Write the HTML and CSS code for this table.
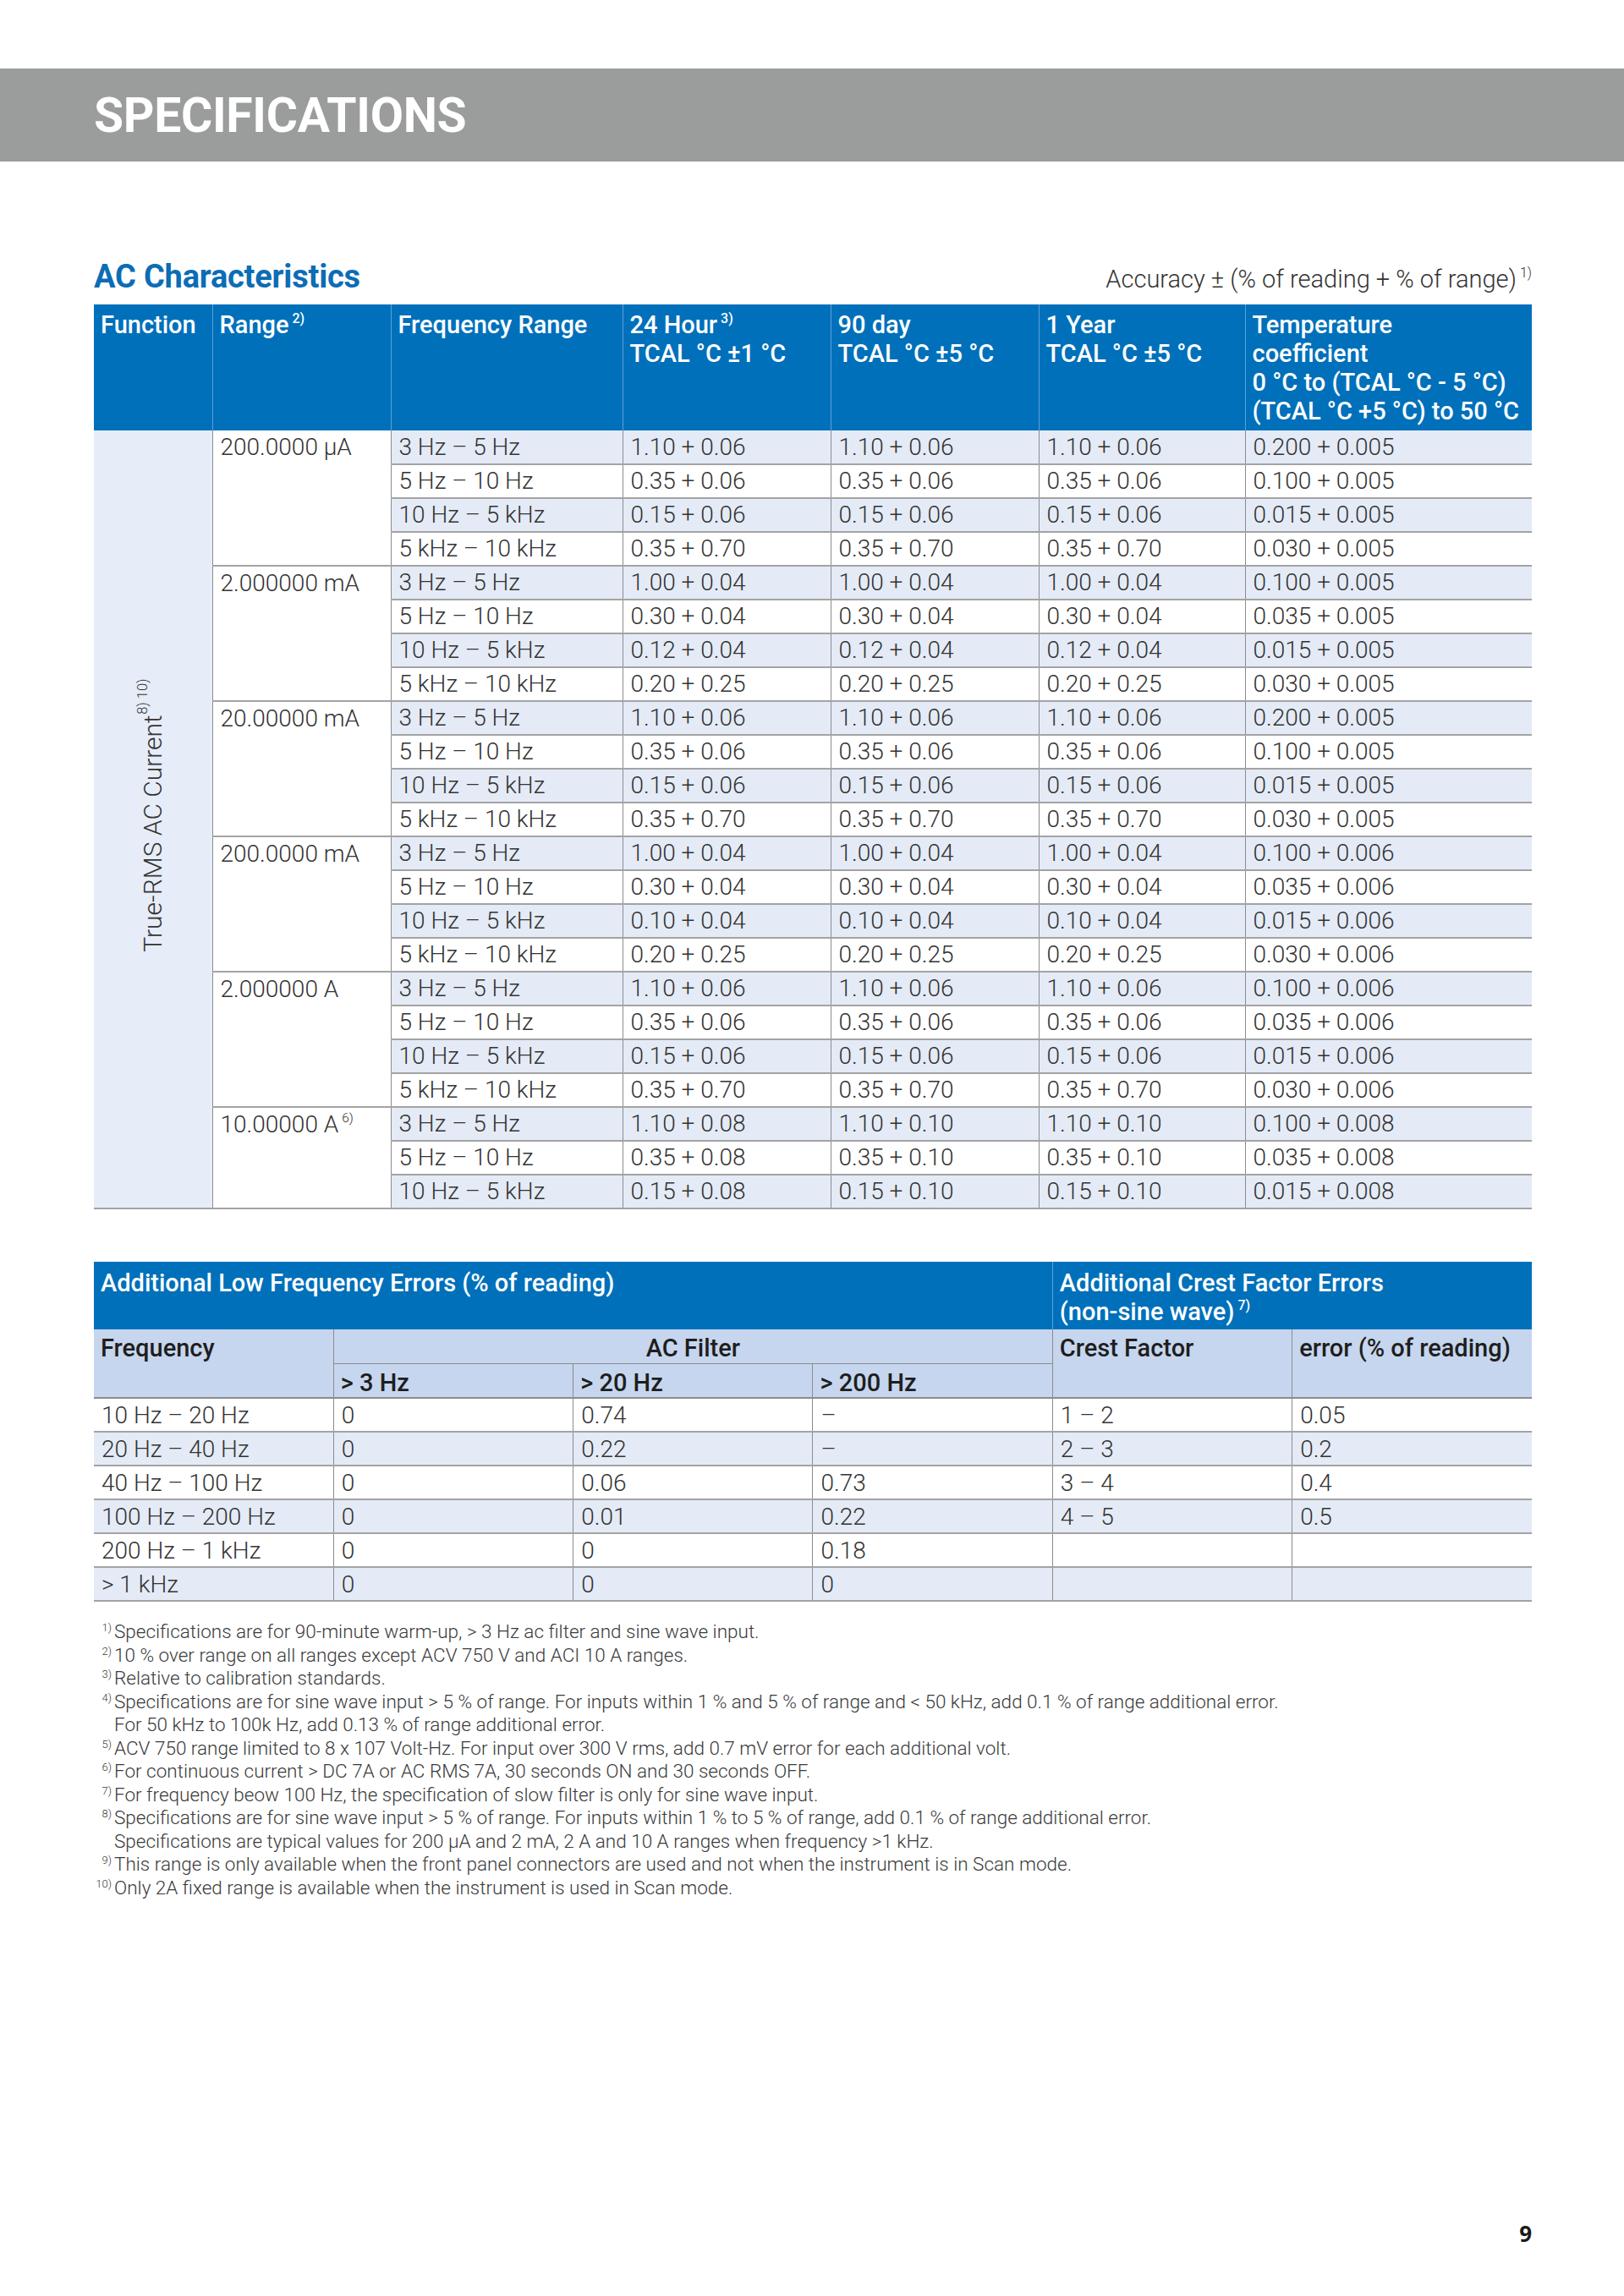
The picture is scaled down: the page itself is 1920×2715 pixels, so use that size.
FILE: index.html
```html
<!DOCTYPE html>
<html lang="en">
<head>
<meta charset="utf-8">
<title>Specifications</title>
<link rel="stylesheet" href="styles.css">
</head>
<body>
<div class="page">
  <header class="banner"><h1>SPECIFICATIONS</h1></header>
  <main class="content">
    <div class="section-head">
      <h2>AC Characteristics</h2>
      <p class="accuracy">Accuracy ± (% of reading + % of range)<sup>1)</sup></p>
    </div>
    <table class="spec">
      <colgroup>
        <col class="w-fn"><col class="w-range"><col class="w-freq"><col class="w-acc"><col class="w-acc"><col class="w-acc2"><col class="w-temp">
      </colgroup>
      <thead>
        <tr>
          <th>Function</th>
          <th>Range<sup>2)</sup></th>
          <th>Frequency Range</th>
          <th>24 Hour<sup>3)</sup><br>TCAL °C ±1 °C</th>
          <th>90 day<br>TCAL °C ±5 °C</th>
          <th>1 Year<br>TCAL °C ±5 °C</th>
          <th>Temperature<br>coefficient<br>0 °C to (TCAL °C - 5 °C)<br>(TCAL °C +5 °C) to 50 °C</th>
        </tr>
      </thead>
      <tbody>
        <tr><td rowspan="23" class="fn"><div class="vert">True-RMS AC Current<sup>8) 10)</sup></div></td><td rowspan="4" class="rg">200.0000 µA</td><td>3 Hz – 5 Hz</td><td>1.10 + 0.06</td><td>1.10 + 0.06</td><td>1.10 + 0.06</td><td>0.200 + 0.005</td></tr>
        <tr><td>5 Hz – 10 Hz</td><td>0.35 + 0.06</td><td>0.35 + 0.06</td><td>0.35 + 0.06</td><td>0.100 + 0.005</td></tr>
        <tr><td>10 Hz – 5 kHz</td><td>0.15 + 0.06</td><td>0.15 + 0.06</td><td>0.15 + 0.06</td><td>0.015 + 0.005</td></tr>
        <tr><td>5 kHz – 10 kHz</td><td>0.35 + 0.70</td><td>0.35 + 0.70</td><td>0.35 + 0.70</td><td>0.030 + 0.005</td></tr>
        <tr><td rowspan="4" class="rg">2.000000 mA</td><td>3 Hz – 5 Hz</td><td>1.00 + 0.04</td><td>1.00 + 0.04</td><td>1.00 + 0.04</td><td>0.100 + 0.005</td></tr>
        <tr><td>5 Hz – 10 Hz</td><td>0.30 + 0.04</td><td>0.30 + 0.04</td><td>0.30 + 0.04</td><td>0.035 + 0.005</td></tr>
        <tr><td>10 Hz – 5 kHz</td><td>0.12 + 0.04</td><td>0.12 + 0.04</td><td>0.12 + 0.04</td><td>0.015 + 0.005</td></tr>
        <tr><td>5 kHz – 10 kHz</td><td>0.20 + 0.25</td><td>0.20 + 0.25</td><td>0.20 + 0.25</td><td>0.030 + 0.005</td></tr>
        <tr><td rowspan="4" class="rg">20.00000 mA</td><td>3 Hz – 5 Hz</td><td>1.10 + 0.06</td><td>1.10 + 0.06</td><td>1.10 + 0.06</td><td>0.200 + 0.005</td></tr>
        <tr><td>5 Hz – 10 Hz</td><td>0.35 + 0.06</td><td>0.35 + 0.06</td><td>0.35 + 0.06</td><td>0.100 + 0.005</td></tr>
        <tr><td>10 Hz – 5 kHz</td><td>0.15 + 0.06</td><td>0.15 + 0.06</td><td>0.15 + 0.06</td><td>0.015 + 0.005</td></tr>
        <tr><td>5 kHz – 10 kHz</td><td>0.35 + 0.70</td><td>0.35 + 0.70</td><td>0.35 + 0.70</td><td>0.030 + 0.005</td></tr>
        <tr><td rowspan="4" class="rg">200.0000 mA</td><td>3 Hz – 5 Hz</td><td>1.00 + 0.04</td><td>1.00 + 0.04</td><td>1.00 + 0.04</td><td>0.100 + 0.006</td></tr>
        <tr><td>5 Hz – 10 Hz</td><td>0.30 + 0.04</td><td>0.30 + 0.04</td><td>0.30 + 0.04</td><td>0.035 + 0.006</td></tr>
        <tr><td>10 Hz – 5 kHz</td><td>0.10 + 0.04</td><td>0.10 + 0.04</td><td>0.10 + 0.04</td><td>0.015 + 0.006</td></tr>
        <tr><td>5 kHz – 10 kHz</td><td>0.20 + 0.25</td><td>0.20 + 0.25</td><td>0.20 + 0.25</td><td>0.030 + 0.006</td></tr>
        <tr><td rowspan="4" class="rg">2.000000 A</td><td>3 Hz – 5 Hz</td><td>1.10 + 0.06</td><td>1.10 + 0.06</td><td>1.10 + 0.06</td><td>0.100 + 0.006</td></tr>
        <tr><td>5 Hz – 10 Hz</td><td>0.35 + 0.06</td><td>0.35 + 0.06</td><td>0.35 + 0.06</td><td>0.035 + 0.006</td></tr>
        <tr><td>10 Hz – 5 kHz</td><td>0.15 + 0.06</td><td>0.15 + 0.06</td><td>0.15 + 0.06</td><td>0.015 + 0.006</td></tr>
        <tr><td>5 kHz – 10 kHz</td><td>0.35 + 0.70</td><td>0.35 + 0.70</td><td>0.35 + 0.70</td><td>0.030 + 0.006</td></tr>
        <tr><td rowspan="3" class="rg">10.00000 A<sup>6)</sup></td><td>3 Hz – 5 Hz</td><td>1.10 + 0.08</td><td>1.10 + 0.10</td><td>1.10 + 0.10</td><td>0.100 + 0.008</td></tr>
        <tr><td>5 Hz – 10 Hz</td><td>0.35 + 0.08</td><td>0.35 + 0.10</td><td>0.35 + 0.10</td><td>0.035 + 0.008</td></tr>
        <tr><td>10 Hz – 5 kHz</td><td>0.15 + 0.08</td><td>0.15 + 0.10</td><td>0.15 + 0.10</td><td>0.015 + 0.008</td></tr>
      </tbody>
    </table>

    <table class="lf">
      <colgroup><col><col><col><col><col><col></colgroup>
      <thead>
        <tr class="lf-top">
          <th colspan="4">Additional Low Frequency Errors (% of reading)</th>
          <th colspan="2" class="sep">Additional Crest Factor Errors<br>(non-sine wave)<sup>7)</sup></th>
        </tr>
        <tr class="lf-sub lf-sub1">
          <th rowspan="2">Frequency</th>
          <th colspan="3" class="center under vl">AC Filter</th>
          <th rowspan="2" class="vl">Crest Factor</th>
          <th rowspan="2" class="vl">error (% of reading)</th>
        </tr>
        <tr class="lf-sub lf-sub2">
          <th class="vl">&gt; 3 Hz</th>
          <th class="vl">&gt; 20 Hz</th>
          <th class="vl">&gt; 200 Hz</th>
        </tr>
      </thead>
      <tbody>
        <tr><td>10 Hz – 20 Hz</td><td>0</td><td>0.74</td><td>–</td><td>1 – 2</td><td>0.05</td></tr>
        <tr><td>20 Hz – 40 Hz</td><td>0</td><td>0.22</td><td>–</td><td>2 – 3</td><td>0.2</td></tr>
        <tr><td>40 Hz – 100 Hz</td><td>0</td><td>0.06</td><td>0.73</td><td>3 – 4</td><td>0.4</td></tr>
        <tr><td>100 Hz – 200 Hz</td><td>0</td><td>0.01</td><td>0.22</td><td>4 – 5</td><td>0.5</td></tr>
        <tr><td>200 Hz – 1 kHz</td><td>0</td><td>0</td><td>0.18</td><td></td><td></td></tr>
        <tr><td>&gt; 1 kHz</td><td>0</td><td>0</td><td>0</td><td></td><td></td></tr>
      </tbody>
    </table>

    <ol class="notes">
      <li><sup class="mk">1)</sup><span>Specifications are for 90-minute warm-up, &gt; 3 Hz ac filter and sine wave input.</span></li>
      <li><sup class="mk">2)</sup><span>10 % over range on all ranges except ACV 750 V and ACI 10 A ranges.</span></li>
      <li><sup class="mk">3)</sup><span>Relative to calibration standards.</span></li>
      <li><sup class="mk">4)</sup><span>Specifications are for sine wave input &gt; 5 % of range. For inputs within 1 % and 5 % of range and &lt; 50 kHz, add 0.1 % of range additional error.<br>For 50 kHz to 100k Hz, add 0.13 % of range additional error.</span></li>
      <li><sup class="mk">5)</sup><span>ACV 750 range limited to 8 x 107 Volt-Hz. For input over 300 V rms, add 0.7 mV error for each additional volt.</span></li>
      <li><sup class="mk">6)</sup><span>For continuous current &gt; DC 7A or AC RMS 7A, 30 seconds ON and 30 seconds OFF.</span></li>
      <li><sup class="mk">7)</sup><span>For frequency beow 100 Hz, the specification of slow filter is only for sine wave input.</span></li>
      <li><sup class="mk">8)</sup><span>Specifications are for sine wave input &gt; 5 % of range. For inputs within 1 % to 5 % of range, add 0.1 % of range additional error.<br>Specifications are typical values for 200 µA and 2 mA, 2 A and 10 A ranges when frequency &gt;1 kHz.</span></li>
      <li><sup class="mk">9)</sup><span>This range is only available when the front panel connectors are used and not when the instrument is in Scan mode.</span></li>
      <li><sup class="mk">10)</sup><span>Only 2A fixed range is available when the instrument is used in Scan mode.</span></li>
    </ol>
  </main>
  <footer class="page-num">9</footer>
</div>
</body>
</html>
```

FILE: styles.css
```css
* { box-sizing: border-box; margin: 0; padding: 0; }
html, body { background: #fff; }
body {
  font-family: Roboto, "Liberation Sans", sans-serif;
  color: #333;
  width: 1920px;
}
.page {
  min-height: 2715px;
  display: flex;
  flex-direction: column;
  padding-top: 81px;
}
.banner {
  height: 110px;
  background: #9b9c9c;
  display: flex;
  align-items: center;
  padding-left: 111px;
}
.banner h1 {
  font-size: 57px;
  font-weight: 700;
  color: #fff;
  line-height: 1;
  letter-spacing: -0.3px;
}
.content {
  padding: 0 109px 0 111px;
}
.section-head {
  display: flex;
  justify-content: space-between;
  align-items: baseline;
  margin-top: 114px;
  height: 44px;
}
.section-head h2 {
  font-size: 38px;
  font-weight: 700;
  color: #0b6db5;
  line-height: 44px;
  letter-spacing: -0.2px;
}
.accuracy {
  font-size: 29px;
  font-weight: 300;
  line-height: 44px;
  color: #333;
}
sup {
  font-size: 0.55em;
  vertical-align: 0.75em;
  line-height: 0;
  margin-left: 4px;
}

/* main spec table */
table {
  border-collapse: collapse;
  table-layout: fixed;
  width: 1700px;
}
.spec { margin-top: 11px; }
.w-fn { width: 140px; }
.w-range { width: 211px; }
.w-freq { width: 274px; }
.w-acc { width: 246px; }
.w-acc2 { width: 244px; }
.w-temp { width: 339px; }

th {
  text-align: left;
  font-weight: 500;
  vertical-align: top;
}
.spec thead tr { height: 149px; }
.spec th, .lf-top th {
  background: #0070bb;
  color: #fff;
  font-size: 29px;
  line-height: 34px;
  padding: 7px 8px 0 8px;
  border-left: 1px solid #5e9fd4;
}
.spec th:first-child, .lf-top th:first-child { border-left: none; }

.spec tbody tr { height: 40px; }
td {
  font-size: 28px;
  font-weight: 300;
  line-height: 34px;
  color: #333;
  padding: 0 9px;
  vertical-align: middle;
  white-space: nowrap;
  border-left: 1px solid #8c8c8c;
  border-bottom: 2px solid #a3a3a3;
}
tbody tr:nth-child(odd) td { background: #e4ebf6; }
.spec tbody tr td.rg {
  background: #fff;
  vertical-align: top;
  padding-top: 3px;
}
.spec tbody tr td.fn {
  background: #e6edf8;
  border-left: none;
  text-align: center;
  vertical-align: middle;
  padding: 0;
}
.vert {
  display: inline-block;
  writing-mode: vertical-rl;
  transform: rotate(180deg);
  white-space: nowrap;
  font-size: 30px;
  font-weight: 300;
  line-height: 34px;
  color: #333;
}
.vert sup { margin-left: 5px; font-size: 0.55em; }
.lf td:first-child { border-left: none; }

/* low frequency table */
.lf { margin-top: 62px; }
.lf-top { height: 80px; }
.lf-top th { padding-top: 8px; }
.lf-top th.sep { border-left: 1px solid #5e9fd4; }
.lf-sub1 { height: 40px; }
.lf-sub2 { height: 41px; }
.lf-sub th {
  background: #c6d6ee;
  color: #1e1e1e;
  font-size: 29px;
  line-height: 34px;
  padding: 5px 8px 0 8px;
  border-bottom: 2px solid #8c8c8c;
}
.lf-sub th.vl { border-left: 1px solid #8c8c8c; }
.lf-sub th.center { text-align: center; }
.lf-sub th.under { border-bottom: 1px solid #8c8c8c; }
.lf tbody tr { height: 40px; }
.lf tbody td { padding-top: 2px; }
.lf tbody tr:nth-child(odd) td { background: #fff; }
.lf tbody tr:nth-child(even) td { background: #e4ebf6; }

/* footnotes */
.notes {
  list-style: none;
  margin-top: 22px;
  font-size: 22.5px;
  font-weight: 300;
  line-height: 27.5px;
  color: #3a3a3a;
}
.notes li {
  display: grid;
  grid-template-columns: 24px 1fr;
}
.notes .mk {
  justify-self: end;
  align-self: start;
  font-size: 13px;
  line-height: 18px;
  vertical-align: baseline;
  margin: 0 3px 0 0;
}

.page-num {
  margin-top: auto;
  text-align: right;
  padding: 0 109px 59px 0;
  font-family: "Open Sans", Roboto, sans-serif;
  font-size: 26px;
  font-weight: 700;
  line-height: 30px;
  color: #1a1a1a;
}
```
